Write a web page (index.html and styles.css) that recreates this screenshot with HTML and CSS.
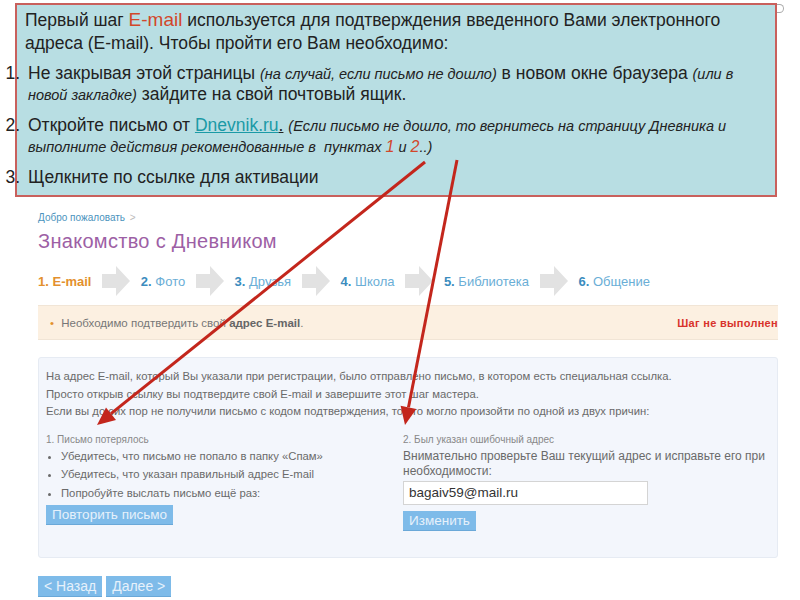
FILE: index.html
```html
<!DOCTYPE html>
<html lang="ru">
<head>
  <meta charset="UTF-8">
  <title>Шаг E-mail</title>
  <link rel="stylesheet" href="styles.css">
</head>
<body>
  <div class="note">
    <p>Первый шаг <span class="hl">E-mail</span> используется для подтверждения введенного Вами электронного адреса (E-mail). Чтобы пройти его Вам необходимо:</p>
    <ol>
      <li>Не закрывая этой страницы <i>(на случай, если письмо не дошло)</i> в новом окне браузера <i>(или в новой закладке)</i> зайдите на свой почтовый ящик.</li>
      <li>Откройте письмо от <a href="#">Dnevnik.ru</a><u>.</u> <i>(Если письмо не дошло, то вернитесь на страницу Дневника и выполните действия рекомендованные в&nbsp; пунктах <span class="num">1</span> и <span class="num">2</span>..)</i></li>
      <li>Щелкните по ссылке для активации</li>
    </ol>
  </div>

  <div class="page">
    <div class="crumbs">Добро пожаловать <span>&gt;</span></div>
    <h1>Знакомство с Дневником</h1>

    <div class="steps">
      <span class="step current"><b>1.</b> E-mail</span>
      <svg class="step-arrow" width="28" height="30" viewBox="0 0 28 30"><polygon points="0,8 14,8 14,0 28,15 14,30 14,22 0,22"/></svg>
      <span class="step"><b>2.</b> Фото</span>
      <svg class="step-arrow" width="28" height="30" viewBox="0 0 28 30"><polygon points="0,8 14,8 14,0 28,15 14,30 14,22 0,22"/></svg>
      <span class="step"><b>3.</b> Друзья</span>
      <svg class="step-arrow" width="28" height="30" viewBox="0 0 28 30"><polygon points="0,8 14,8 14,0 28,15 14,30 14,22 0,22"/></svg>
      <span class="step"><b>4.</b> Школа</span>
      <svg class="step-arrow" width="28" height="30" viewBox="0 0 28 30"><polygon points="0,8 14,8 14,0 28,15 14,30 14,22 0,22"/></svg>
      <span class="step"><b>5.</b> Библиотека</span>
      <svg class="step-arrow" width="28" height="30" viewBox="0 0 28 30"><polygon points="0,8 14,8 14,0 28,15 14,30 14,22 0,22"/></svg>
      <span class="step"><b>6.</b> Общение</span>
    </div>

    <div class="notice">
      <span class="notice-text"><span class="dot">•</span> Необходимо подтвердить свой <b>адрес E-mail</b>.</span>
      <span class="notice-status">Шаг не выполнен</span>
    </div>

    <div class="panel">
      <p>На адрес E-mail, который Вы указали при регистрации, было отправлено письмо, в котором есть специальная ссылка.</p>
      <p>Просто открыв ссылку вы подтвердите свой E-mail и завершите этот шаг мастера.</p>
      <p>Если вы до сих пор не получили письмо с кодом подтверждения, то это могло произойти по одной из двух причин:</p>

      <div class="cols">
        <div class="col">
          <div class="col-title">1. Письмо потерялось</div>
          <ul>
            <li>Убедитесь, что письмо не попало в папку «Спам»</li>
            <li>Убедитесь, что указан правильный адрес E-mail</li>
            <li>Попробуйте выслать письмо ещё раз:</li>
          </ul>
          <button class="btn">Повторить письмо</button>
        </div>
        <div class="col">
          <div class="col-title">2. Был указан ошибочный адрес</div>
          <div class="col-text">Внимательно проверьте Ваш текущий адрес и исправьте его при необходимости:</div>
          <input class="email" type="text" value="bagaiv59@mail.ru">
          <button class="btn">Изменить</button>
        </div>
      </div>
    </div>

    <div class="nav">
      <button class="btn big">&lt; Назад</button>
      <button class="btn big">Далее &gt;</button>
    </div>
  </div>

  <svg class="arrows" width="800" height="600" viewBox="0 0 800 600">
    <line x1="425" y1="162" x2="111" y2="413.7"/>
    <polygon points="97,425 116,420 106,407.5"/>
    <line x1="457" y1="160" x2="408.5" y2="407.3"/>
    <polygon points="405,425 416.3,408.9 400.6,405.8"/>
  </svg>
</body>
</html>
```

FILE: styles.css
```css
body {
  margin: 0;
  width: 800px;
  height: 600px;
  overflow: hidden;
  position: relative;
  background: #fff;
  font-family: "Liberation Sans", Arial, sans-serif;
}

/* note box on top */
.note {
  position: relative;
  margin: 3px 0 0 15px;
  width: 762px;
  height: 194px;
  box-sizing: border-box;
  border: 2px solid #c9605c;
  background: #b8dee3;
  padding: 4px 10px 0 8px;
  color: #222;
  font-size: 17.5px;
}
.note::after {
  content: "";
  position: absolute;
  top: -1px;
  right: -9px;
  width: 6px;
  height: 7px;
  border: 1px solid #aaa;
  border-left: none;
  border-radius: 0 5px 5px 0;
}
.note p {
  margin: 0;
  line-height: 23px;
}
.note .hl {
  color: #d2472a;
  font-size: 19px;
  line-height: 1;
}
.note ol {
  margin: 8px 0 0;
  padding: 0;
  list-style-position: outside;
}
.note li {
  line-height: 21px;
  margin-bottom: 10px;
  padding-left: 3px;
}
.note i {
  font-size: 14.5px;
  line-height: 1;
}
.note a {
  color: #1b9aa6;
}
.note u {
  text-decoration: underline;
}
.note .num {
  color: #d2472a;
  font-size: 16px;
  line-height: 1;
}

/* page below */
.page {
  padding: 0 22px 0 38px;
  color: #666;
}
.crumbs {
  margin-top: 14px;
  font-size: 10px;
  line-height: 14px;
  color: #4b93bd;
}
.crumbs span {
  color: #bbb;
  margin-left: 2px;
}
h1 {
  margin: 4px 0 0;
  font-size: 20px;
  line-height: 24px;
  font-weight: normal;
  color: #9d5fa5;
  letter-spacing: 0.3px;
}
.steps {
  display: flex;
  align-items: center;
  gap: 9.7px;
  margin-top: 13px;
  height: 30px;
}
.step {
  font-size: 13px;
  color: #6aaed6;
  margin-right: 1px;
}
.step b {
  color: #3b8cbe;
}
.step.current,
.step.current b {
  color: #e3902e;
  font-weight: bold;
}
.step-arrow {
  fill: #e2e2e2;
  margin-right: 1px;
}

.notice {
  display: flex;
  justify-content: space-between;
  align-items: center;
  margin-top: 9px;
  height: 35px;
  box-sizing: border-box;
  padding: 0 0 0 12px;
  background: #fcf0e1;
  border-top: 1px solid #f1e5d6;
  border-bottom: 1px solid #f1e5d6;
  font-size: 11.5px;
  color: #777;
  white-space: nowrap;
  overflow: hidden;
}
.notice .dot {
  color: #e3902e;
  margin-right: 4px;
}
.notice b {
  color: #666;
}
.notice-status {
  color: #d8332c;
  font-weight: bold;
  font-size: 11px;
  letter-spacing: 0.3px;
}

.panel {
  margin-top: 17px;
  height: 201px;
  box-sizing: border-box;
  padding: 10px 7px 0;
  background: #f3f6fc;
  border: 1px solid #e6ebf3;
  border-radius: 3px;
  font-size: 11.3px;
  color: #6a6a6a;
}
.panel p {
  margin: 0;
  line-height: 17.5px;
}
.cols {
  display: grid;
  grid-template-columns: 357px 1fr;
  margin-top: 12px;
}
.col-title {
  font-size: 10px;
  line-height: 14px;
  color: #888;
}
.panel ul {
  margin: 0;
  padding-left: 15px;
}
.panel li {
  line-height: 18.5px;
}
.col-text {
  margin-top: 2px;
  font-size: 12px;
  line-height: 15px;
  color: #6a6a6a;
}
.email {
  display: block;
  margin-top: 2px;
  width: 245px;
  height: 24px;
  box-sizing: border-box;
  border: 1px solid #d4d4d4;
  background: #fff;
  padding: 0 5px;
  font-family: "Liberation Sans", Arial, sans-serif;
  font-size: 13.5px;
  color: #333;
}
.btn {
  display: block;
  height: 20px;
  padding: 0 6px;
  border: none;
  border-bottom: 1px solid #6aa8d8;
  background: #7ebbe9;
  color: #e6f1fb;
  font-family: "Liberation Sans", Arial, sans-serif;
  font-size: 13.5px;
}
.col .btn {
  margin-top: 3px;
}
.col .email + .btn {
  margin-top: 6px;
}
.nav {
  display: flex;
  gap: 4px;
  margin-top: 18px;
}
.btn.big {
  margin: 0;
  height: 21px;
  font-size: 14px;
  padding: 0 6px;
}

/* red pointers */
.arrows {
  position: absolute;
  top: 0;
  left: 0;
  pointer-events: none;
}
.arrows line {
  stroke: #c3261c;
  stroke-width: 3;
}
.arrows polygon {
  fill: #c3261c;
}
```
